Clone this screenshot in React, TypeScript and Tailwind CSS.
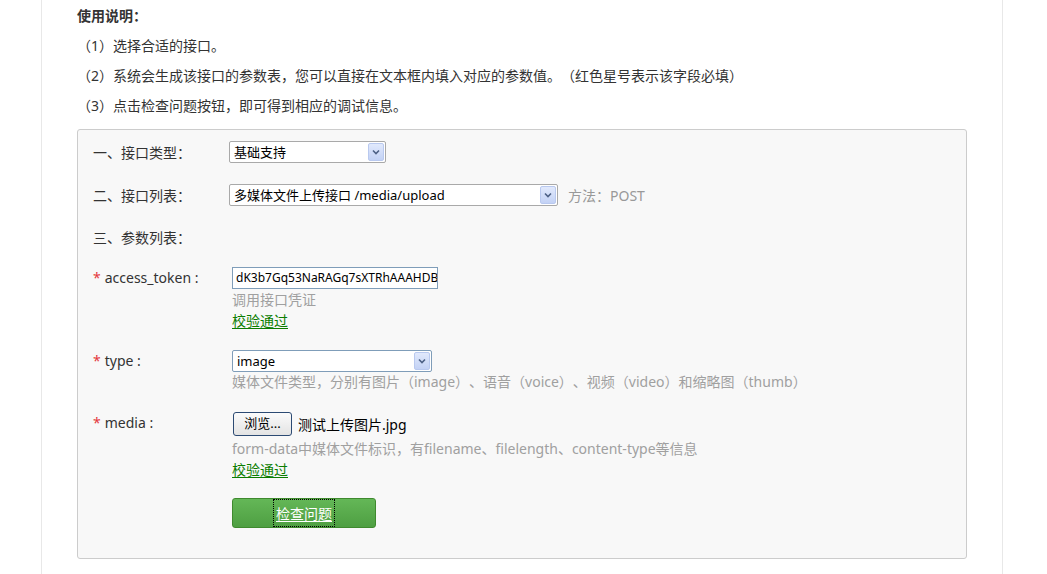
const font = { fontFamily: '"Noto Sans", "Noto Sans CJK SC", sans-serif' };

const Arrow = () => (
  <div className="w-[16px] h-[18px] mr-[1px] flex items-center justify-center rounded-[2px] border border-[#b9c9ef] bg-gradient-to-b from-[#e1e9fc] to-[#c3d2f5]">
    <svg width="8" height="6" viewBox="0 0 8 6">
      <path d="M1 1.5 L4 4.5 L7 1.5" fill="none" stroke="#4d6185" strokeWidth="1.6" />
    </svg>
  </div>
);

const FakeSelect = ({ value, width, blue }: { value: string; width: string; blue?: boolean }) => (
  <div
    className={`${width} h-[22px] flex items-center bg-white border rounded-[2px] ${blue ? 'border-[#7f9db9]' : 'border-[#a9a9a9]'}`}
  >
    <span className="flex-1 pl-[4px] text-[13px] text-black leading-[20px] truncate">{value}</span>
    <Arrow />
  </div>
);

const Star = () => <span className="text-[#e4393c] mr-[4px]">*</span>;

const Ok = () => (
  <div className="text-[#0b7d00] underline underline-offset-2 leading-[21px]">校验通过</div>
);

export default function App() {
  return (
    <div className="min-h-[574px] bg-white text-[14px] text-[#333] [text-spacing-trim:space-all]" style={font}>
      <div className="ml-[41px] w-[962px] min-h-[574px] border-x border-[#e8e8e8] px-[35px] pt-[1px]">
        <div className="leading-[30px] font-bold">使用说明：</div>
        <div className="leading-[30px]">（1）选择合适的接口。</div>
        <div className="leading-[30px]">（2）系统会生成该接口的参数表，您可以直接在文本框内填入对应的参数值。（红色星号表示该字段必填）</div>
        <div className="leading-[30px]">（3）点击检查问题按钮，即可得到相应的调试信息。</div>

        <div className="mt-[8px] bg-[#f8f8f8] border border-[#cccccc] rounded-[3px] pl-[15px] pt-[11px] pb-[30px]">
          <div className="flex items-center h-[22px]">
            <div className="w-[136px]">一、接口类型：</div>
            <FakeSelect value="基础支持" width="w-[157px]" />
          </div>

          <div className="flex items-center h-[22px] mt-[21px]">
            <div className="w-[136px]">二、接口列表：</div>
            <FakeSelect value="多媒体文件上传接口 /media/upload" width="w-[329px]" />
            <span className="ml-[10px] text-[#999]">方法：POST</span>
          </div>

          <div className="h-[22px] leading-[22px] mt-[21px]">三、参数列表：</div>

          <div className="flex mt-[18px]">
            <div className="w-[139px] leading-[22px]">
              <Star />access_token :
            </div>
            <div>
              <div className="w-[206px] h-[22px] overflow-hidden whitespace-nowrap bg-white border border-[#7f9db9] flex items-center pl-[3px] text-[12px] text-black">
                dK3b7Gq53NaRAGq7sXTRhAAAHDB
              </div>
              <div className="text-[#a0a0a0] leading-[21px]">调用接口凭证</div>
              <Ok />
            </div>
          </div>

          <div className="flex mt-[19px]">
            <div className="w-[139px] leading-[22px]">
              <Star />type :
            </div>
            <div>
              <FakeSelect value="image" width="w-[200px]" blue />
              <div className="text-[#a0a0a0] leading-[20px]">
                媒体文件类型，分别有图片（image）、语音（voice）、视频（video）和缩略图（thumb）
              </div>
            </div>
          </div>

          <div className="flex mt-[20px]">
            <div className="w-[139px] leading-[22px]">
              <Star />media :
            </div>
            <div>
              <div className="flex items-center h-[24px]">
                <div className="ml-[1px] w-[59px] h-[24px] flex items-center justify-center rounded-[3px] border border-[#2c4a73] bg-gradient-to-b from-[#fbfbfb] to-[#e3e3e3] text-[13px] text-black">
                  浏览...
                </div>
                <span className="ml-[6px] text-black">测试上传图片.jpg</span>
              </div>
              <div className="mt-[2px] text-[#a0a0a0] leading-[21px]">
                form-data中媒体文件标识，有filename、filelength、content-type等信息
              </div>
              <Ok />
            </div>
          </div>

          <div className="ml-[139px] mt-[18px] w-[144px] h-[30px] flex items-center justify-center rounded-[3px] border border-[#3f8a2e] bg-gradient-to-b from-[#64b757] to-[#4e9f42]">
            <span className="h-[28px] leading-[28px] px-[2px] border border-dotted border-black text-white underline underline-offset-2">
              检查问题
            </span>
          </div>
        </div>
      </div>
    </div>
  );
}
